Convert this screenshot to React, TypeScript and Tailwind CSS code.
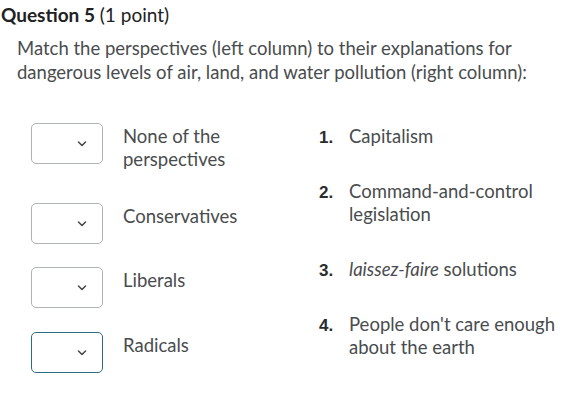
import React from 'react';

const font = { fontFamily: 'Lato, "Open Sans", sans-serif' };

function Chevron() {
  return (
    <svg width="10" height="6" viewBox="0 0 10 6" className="text-[#494c4e]">
      <path d="M1.5 1l3.5 3.5L8.5 1" fill="none" stroke="currentColor" strokeWidth="1.6" strokeLinecap="round" strokeLinejoin="round" />
    </svg>
  );
}

function SelectBox({ focused }: { focused?: boolean }) {
  return (
    <div
      className={`flex h-[41px] w-[72px] shrink-0 items-center justify-end rounded-[5px] border bg-white pr-[15px] ${
        focused ? 'border-[#2e6d7e]' : 'border-[#b0b3b5]'
      }`}
    >
      <Chevron />
    </div>
  );
}

const perspectives = [
  { label: ['None of the', 'perspectives'], mt: 'mt-0' },
  { label: ['Conservatives'], mt: 'mt-[32px]' },
  { label: ['Liberals'], mt: 'mt-[23px]' },
  { label: ['Radicals'], mt: 'mt-[24px]', focused: true },
];

const explanations = [
  { n: '1.', text: <>Capitalism</> },
  { n: '2.', text: <>Command-and-control<br />legislation</> },
  { n: '3.', text: <><i>laissez-faire</i> solutions</> },
  { n: '4.', text: <>People don't care enough<br />about the earth</> },
];

export default function App() {
  return (
    <div className="h-[411px] w-[588px] bg-white text-[#494c4e]" style={font}>
      <h2 className="pt-[3px] pl-[1px] text-[19px] leading-[24px] text-[#202122]">
        <span className="font-bold">Question 5</span> (1 point)
      </h2>

      <p className="mt-[9px] pl-[17px] text-[18.5px] leading-[24px]">
        Match the perspectives (left column) to their explanations for
        <br />
        dangerous levels of air, land, and water pollution (right column):
      </p>

      <div className="mt-[39px] flex">
        {/* Left column: dropdowns + perspectives */}
        <div className="w-[288px] pl-[31px]">
          {perspectives.map((p) => (
            <div key={p.label[0]} className={`flex items-start ${p.mt}`}>
              <SelectBox focused={p.focused} />
              <div className="ml-[20px] mt-[2px] text-[18.5px] leading-[23px]">
                {p.label.map((l) => (
                  <div key={l}>{l}</div>
                ))}
              </div>
            </div>
          ))}
        </div>

        {/* Right column: numbered explanations */}
        <div className="ml-[31px] flex flex-col gap-[32px] pt-[2px]">
          {explanations.map((e) => (
            <div key={e.n} className="flex items-start text-[18.5px] leading-[23px]">
              <span
                className="w-[30px] pt-[3px] text-[17px] leading-[20px] text-[#2a2c2e]"
                style={{ fontFamily: '"Liberation Sans", Arial, sans-serif', fontWeight: 600 }}
              >
                {e.n}
              </span>
              <span>{e.text}</span>
            </div>
          ))}
        </div>
      </div>
    </div>
  );
}
